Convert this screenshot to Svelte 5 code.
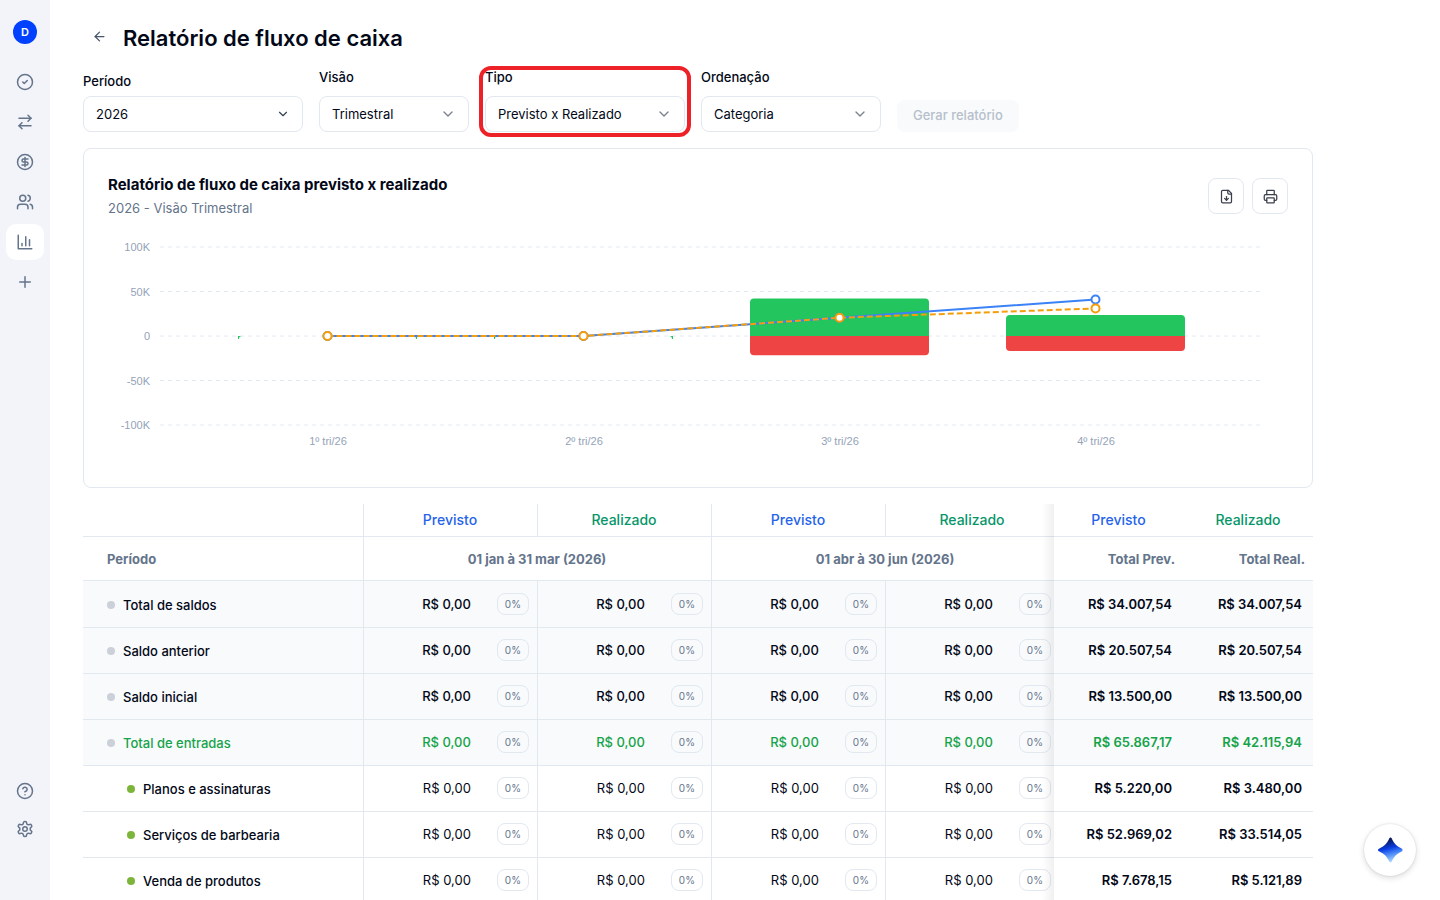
<script lang="ts">
	type Row = {
		label: string;
		kind: 'total' | 'income' | 'child';
		planned: string;
		actual: string;
	};

	const icons: Record<string, string[]> = {
		check: ['M22 12a10 10 0 1 1-20 0 10 10 0 0 1 20 0', 'm9 12 2 2 4-4'],
		transfer: ['m16 3 4 4-4 4', 'M20 7H4', 'm8 21-4-4 4-4', 'M4 17h16'],
		dollar: [
			'M22 12a10 10 0 1 1-20 0 10 10 0 0 1 20 0',
			'M16 8h-6a2 2 0 1 0 0 4h4a2 2 0 1 1 0 4H8',
			'M12 18V6'
		],
		users: [
			'M16 21v-2a4 4 0 0 0-4-4H6a4 4 0 0 0-4 4v2',
			'M13 7a4 4 0 1 1-8 0 4 4 0 0 1 8 0',
			'M22 21v-2a4 4 0 0 0-3-3.87',
			'M16 3.13a4 4 0 0 1 0 7.75'
		],
		chart: ['M3 3v18h18', 'M18 17V9', 'M13 17V5', 'M8 17v-3'],
		plus: ['M5 12h14', 'M12 5v14'],
		help: [
			'M22 12a10 10 0 1 1-20 0 10 10 0 0 1 20 0',
			'M9.09 9a3 3 0 0 1 5.83 1c0 2-3 3-3 3',
			'M12 17h.01'
		],
		settings: [
			'M12.22 2h-.44a2 2 0 0 0-2 2v.18a2 2 0 0 1-1 1.73l-.43.25a2 2 0 0 1-2 0l-.15-.08a2 2 0 0 0-2.73.73l-.22.38a2 2 0 0 0 .73 2.73l.15.1a2 2 0 0 1 1 1.72v.51a2 2 0 0 1-1 1.74l-.15.09a2 2 0 0 0-.73 2.73l.22.38a2 2 0 0 0 2.73.73l.15-.08a2 2 0 0 1 2 0l.43.25a2 2 0 0 1 1 1.73V20a2 2 0 0 0 2 2h.44a2 2 0 0 0 2-2v-.18a2 2 0 0 1 1-1.73l.43-.25a2 2 0 0 1 2 0l.15.08a2 2 0 0 0 2.73-.73l.22-.39a2 2 0 0 0-.73-2.73l-.15-.08a2 2 0 0 1-1-1.74v-.5a2 2 0 0 1 1-1.74l.15-.09a2 2 0 0 0 .73-2.73l-.22-.38a2 2 0 0 0-2.73-.73l-.15.08a2 2 0 0 1-2 0l-.43-.25a2 2 0 0 1-1-1.73V4a2 2 0 0 0-2-2z',
			'M15 12a3 3 0 1 1-6 0 3 3 0 0 1 6 0'
		],
		back: ['m12 19-7-7 7-7', 'M19 12H5'],
		chevron: ['m6 9 6 6 6-6'],
		download: [
			'M15 2H6a2 2 0 0 0-2 2v16a2 2 0 0 0 2 2h12a2 2 0 0 0 2-2V7z',
			'M14 2v4a2 2 0 0 0 2 2h4',
			'M12 18v-6',
			'm9 15 3 3 3-3'
		],
		printer: [
			'M6 18H4a2 2 0 0 1-2-2v-5a2 2 0 0 1 2-2h16a2 2 0 0 1 2 2v5a2 2 0 0 1-2 2h-2',
			'M6 9V3a1 1 0 0 1 1-1h10a1 1 0 0 1 1 1v6',
			'M7 14h10a1 1 0 0 1 1 1v6a1 1 0 0 1-1 1H7a1 1 0 0 1-1-1v-6a1 1 0 0 1 1-1z'
		]
	};

	const nav = [
		{ icon: 'check', label: 'Tarefas' },
		{ icon: 'transfer', label: 'Lançamentos' },
		{ icon: 'dollar', label: 'Financeiro' },
		{ icon: 'users', label: 'Contatos' },
		{ icon: 'chart', label: 'Relatórios' },
		{ icon: 'plus', label: 'Adicionar' }
	];

	const footerNav = [
		{ icon: 'help', label: 'Ajuda' },
		{ icon: 'settings', label: 'Configurações' }
	];

	const periods = ['01 jan à 31 mar (2026)', '01 abr à 30 jun (2026)'];

	const rows: Row[] = [
		{ label: 'Total de saldos', kind: 'total', planned: '34.007,54', actual: '34.007,54' },
		{ label: 'Saldo anterior', kind: 'total', planned: '20.507,54', actual: '20.507,54' },
		{ label: 'Saldo inicial', kind: 'total', planned: '13.500,00', actual: '13.500,00' },
		{ label: 'Total de entradas', kind: 'income', planned: '65.867,17', actual: '42.115,94' },
		{ label: 'Planos e assinaturas', kind: 'child', planned: '5.220,00', actual: '3.480,00' },
		{ label: 'Serviços de barbearia', kind: 'child', planned: '52.969,02', actual: '33.514,05' },
		{ label: 'Venda de produtos', kind: 'child', planned: '7.678,15', actual: '5.121,89' }
	];

	// chart geometry
	const plotLeft = 52;
	const plotRight = 1156;
	const band = 256;
	const barWidth = 179;
	const zeroY = 105;
	const ticks = [100, 50, 0, -50, -100];

	const quarters = [
		{ label: '1º tri/26', income: 0, expense: 0, planned: 0, actual: 0 },
		{ label: '2º tri/26', income: 0, expense: 0, planned: 0, actual: 0 },
		{ label: '3º tri/26', income: 42.1, expense: 21.6, planned: 20.5, actual: 20.5 },
		{ label: '4º tri/26', income: 23.7, expense: 16.8, planned: 41, actual: 31 }
	];

	const scaleY = (value: number) => zeroY - value * 0.89;
	const centerX = (index: number) => plotLeft + 40 + band * (index + 0.5) - 0.5;
	const tickLabel = (tick: number) => (tick === 0 ? '0' : `${tick}K`);

	const plannedLine = quarters.map((q, i) => `${centerX(i)},${scaleY(q.planned)}`).join(' ');
	const actualLine = quarters.map((q, i) => `${centerX(i)},${scaleY(q.actual)}`).join(' ');

	function barPath(index: number, value: number) {
		const x = centerX(index) - barWidth / 2;
		const end = scaleY(value);
		const r = value > 0 ? 4 : -4;
		return `M${x} ${zeroY}V${end + r}Q${x} ${end} ${x + 4} ${end}H${x + barWidth - 4}Q${x + barWidth} ${end} ${x + barWidth} ${end + r}V${zeroY}Z`;
	}
</script>

{#snippet icon(name: string, size: number)}
	<svg class="icon" viewBox="0 0 24 24" width={size} height={size} aria-hidden="true">
		{#each icons[name] as d}
			<path {d} />
		{/each}
	</svg>
{/snippet}

{#snippet field(id: string, label: string, value: string)}
	<div class="field field-{id}">
		<label for={id}>{label}</label>
		<div class="select">
			<select {id}>
				<option>{value}</option>
			</select>
			{@render icon('chevron', id === 'periodo' ? 14 : 16)}
		</div>
	</div>
{/snippet}

<div class="shell">
	<aside class="sidebar">
		<button class="avatar" aria-label="Conta">D</button>
		<nav class="nav">
			{#each nav as item}
				<a href="#{item.icon}" class="nav-item" class:active={item.icon === 'chart'} aria-label={item.label}>
					{@render icon(item.icon, 18)}
				</a>
			{/each}
		</nav>
		<nav class="nav nav-footer">
			{#each footerNav as item}
				<a href="#{item.icon}" class="nav-item" aria-label={item.label}>
					{@render icon(item.icon, 18)}
				</a>
			{/each}
		</nav>
	</aside>

	<main>
		<div class="content">
			<header class="page-header">
				<button class="back" aria-label="Voltar">{@render icon('back', 15)}</button>
				<h1>Relatório de fluxo de caixa</h1>
			</header>

			<form class="filters">
				{@render field('periodo', 'Período', '2026')}
				{@render field('visao', 'Visão', 'Trimestral')}
				{@render field('tipo', 'Tipo', 'Previsto x Realizado')}
				{@render field('ordenacao', 'Ordenação', 'Categoria')}
				<button type="button" class="generate" disabled>Gerar relatório</button>
			</form>

			<section class="card">
				<div class="card-header">
					<div>
						<h2>Relatório de fluxo de caixa previsto x realizado</h2>
						<p>2026 - Visão Trimestral</p>
					</div>
					<div class="actions">
						<button aria-label="Exportar">{@render icon('download', 15)}</button>
						<button aria-label="Imprimir">{@render icon('printer', 15)}</button>
					</div>
				</div>

				<svg class="chart" viewBox="0 0 1180 232">
					{#each ticks as tick}
						<line class="grid" x1={plotLeft} x2={plotRight} y1={scaleY(tick)} y2={scaleY(tick)} />
						<text x={plotLeft - 10} y={scaleY(tick) + 4} text-anchor="end">{tickLabel(tick)}</text>
					{/each}

					{#each quarters as quarter, i}
						{#if quarter.income > 0}
							<path d={barPath(i, quarter.income)} fill="#22c55e" />
							<path d={barPath(i, -quarter.expense)} fill="#ef4444" />
						{:else}
							<!-- an empty bar keeps only its corner marks -->
							<path
								d="M{centerX(i) - 89.5} {zeroY}h4q-3 0-3 3h-1zM{centerX(i) + 89.5} {zeroY}h-4q3 0 3 3h1z"
								fill="#22c55e"
							/>
						{/if}
						<text x={centerX(i) + 0.5} y="214" text-anchor="middle">{quarter.label}</text>
					{/each}

					<polyline class="line planned" points={plannedLine} />
					{#each quarters as quarter, i}
						<circle class="dot planned" cx={centerX(i)} cy={scaleY(quarter.planned)} r="4" />
					{/each}
					<polyline class="line actual" points={actualLine} />
					{#each quarters as quarter, i}
						<circle class="dot actual" cx={centerX(i)} cy={scaleY(quarter.actual)} r="4" />
					{/each}
				</svg>
			</section>

			<div class="table-wrap">
				<table>
					<colgroup>
						<col class="col-label" />
						{#each periods as _}
							<col class="col-value" />
							<col class="col-value" />
						{/each}
						<col class="col-planned" />
						<col class="col-actual" />
					</colgroup>
					<thead>
						<tr class="kinds">
							<td></td>
							{#each periods as _}
								<th class="planned">Previsto</th>
								<th class="actual">Realizado</th>
							{/each}
							<th class="sticky first planned">Previsto</th>
							<th class="sticky last actual">Realizado</th>
						</tr>
						<tr class="periods">
							<th class="label">Período</th>
							{#each periods as period}
								<th colspan="2">{period}</th>
							{/each}
							<th class="sticky first">Total Prev.</th>
							<th class="sticky last">Total Real.</th>
						</tr>
					</thead>
					<tbody>
						{#each rows as row}
							<tr class={row.kind}>
								<th class="label" scope="row">
									<div class="name"><span class="bullet"></span>{row.label}</div>
								</th>
								{#each [0, 1, 2, 3] as _}
									<td>
										<div class="amount">R$ 0,00 <span class="badge">0%</span></div>
									</td>
								{/each}
								<td class="sticky first">R$ {row.planned}</td>
								<td class="sticky last">R$ {row.actual}</td>
							</tr>
						{/each}
					</tbody>
				</table>
			</div>
		</div>
	</main>

	<button class="assistant" aria-label="Assistente">
		<svg viewBox="0 0 26 26" width="26" height="26" aria-hidden="true">
			<defs>
				<linearGradient id="spark" x1="0.35" y1="0" x2="0.6" y2="1">
					<stop offset="0.1" stop-color="#0a1a5c" />
					<stop offset="0.42" stop-color="#0a3be0" />
					<stop offset="0.6" stop-color="#3b78f5" />
					<stop offset="1" stop-color="#b5e3ff" />
				</linearGradient>
			</defs>
			<path
				d="M13.5.5c.7 0 1.100.6 1.500 1.400 2.300 4.700 4.900 7.200 9.600 9.500.8.400.9.900.9 1.600s-.1 1.200-.9 1.600c-4.700 2.300-7.300 4.800-9.600 9.500-.4.800-.8 1.400-1.500 1.400s-1.100-.6-1.500-1.400C9.700 19.400 7.100 16.900 2.400 14.600 1.600 14.200 1 13.700 1 13s.6-1.200 1.400-1.600C7.100 9.100 9.700 6.600 12 1.900c.4-.8.8-1.400 1.500-1.400z"
				fill="url(#spark)"
			/>
		</svg>
	</button>
</div>

<style>
	:global(body) {
		background: #fff;
	}
	.shell {
		display: flex;
		height: 100vh;
		overflow: hidden;
		font-family: Inter, sans-serif;
		font-size: 13px;
		line-height: 20px;
		color: #020817;
	}
	button, select { font: inherit; color: inherit; }
	button { padding: 0; border: 0; background: none; cursor: pointer; }
	h1, h2, p { margin: 0; }
	.icon {
		display: block;
		flex-shrink: 0;
		fill: none;
		stroke: currentColor;
		stroke-width: 2;
		stroke-linecap: round;
		stroke-linejoin: round;
	}

	.sidebar {
		display: flex;
		flex-direction: column;
		align-items: center;
		flex: 0 0 50px;
		box-sizing: border-box;
		padding: 20px 0 53px;
		background: #f2f4f9;
	}
	.avatar {
		width: 24px;
		height: 24px;
		margin-bottom: 20px;
		border-radius: 50%;
		background: #0040ff;
		color: #fff;
		font-size: 11px;
		font-weight: 600;
	}
	.nav { display: grid; gap: 4px; }
	.nav-footer { gap: 2px; margin-top: auto; }
	.nav-item {
		display: grid;
		place-items: center;
		width: 38px;
		height: 36px;
		border-radius: 10px;
		color: #64748b;
	}
	.nav-item.active { background: #fff; }

	main {
		flex: 1;
		min-width: 0;
		padding: 22px 33px 0;
		overflow-y: auto;
		scrollbar-width: none;
	}
	.content { max-width: 1230px; }
	.page-header {
		display: flex;
		gap: 8px;
		margin-bottom: 12px;
	}
	.back {
		display: grid;
		place-items: center;
		width: 32px;
		height: 28px;
		color: #475569;
	}
	h1 {
		font-size: 22px;
		line-height: 32px;
		font-weight: 600;
	}

	.filters {
		display: flex;
		align-items: flex-end;
		gap: 16px;
		margin-bottom: 16px;
	}
	.field {
		position: relative;
		display: grid;
		gap: 8px;
		width: 180px;
	}
	.field label { line-height: 22px; font-weight: 500; }
	.field-periodo { width: 220px; }
	.field-periodo label { line-height: 14px; }
	.field-visao { width: 150px; }
	.field-tipo { width: 200px; }
	.field-tipo::after {
		content: '';
		position: absolute;
		inset: 0 -6px -5px;
		border: 4px solid #ed2228;
		border-radius: 12px;
		pointer-events: none;
	}
	.select { display: grid; align-items: center; }
	.select > :global(*) { grid-area: 1 / 1; }
	.select :global(.icon) {
		justify-self: end;
		margin-right: 13px;
		color: #7c828d;
		pointer-events: none;
	}
	.field-periodo :global(.icon) { color: #334155; }
	select {
		appearance: none;
		width: 100%;
		height: 36px;
		padding: 0 12px;
		border: 1px solid #e2e8f0;
		border-radius: 8px;
		background: #fff;
	}
	.generate {
		height: 32px;
		padding: 0 16px 2px;
		border-radius: 8px;
		background: #f8fafc;
		color: #b6bfcb;
		font-weight: 500;
	}

	.card {
		margin-bottom: 16px;
		padding: 24px;
		border: 1px solid #e2e8f0;
		border-radius: 8px;
	}
	.card-header {
		display: flex;
		align-items: center;
		justify-content: space-between;
		margin-bottom: 12px;
	}
	h2 {
		font-size: 15px;
		line-height: 24px;
		font-weight: 700;
	}
	.card-header p { line-height: 22px; color: #64748b; }
	.actions { display: flex; gap: 8px; }
	.actions button {
		display: grid;
		place-items: center;
		width: 36px;
		height: 36px;
		border: 1px solid #e2e8f0;
		border-radius: 8px;
		color: #3b3f4c;
	}
	.chart { display: block; width: 100%; }
	.chart text {
		font-family: "Liberation Sans", Arial, sans-serif;
		font-size: 11px;
		fill: #94a3b8;
	}
	.grid { stroke: #e2e8f0; stroke-dasharray: 4 4; }
	.line { fill: none; stroke-width: 2; }
	.dot { fill: #fff; stroke-width: 2; }
	.line.planned, .dot.planned { stroke: #3b82f6; }
	.line.actual, .dot.actual { stroke: #f59e0b; }
	.line.actual { stroke-dasharray: 6 3; }

	.table-wrap { overflow-x: auto; scrollbar-width: none; }
	table {
		table-layout: fixed;
		width: 100%;
		min-width: 1235px;
		border-collapse: separate;
		border-spacing: 0;
	}
	.col-label { width: 280px; }
	.col-planned { width: 129px; }
	.col-actual { width: 130px; }
	th, td {
		padding: 0;
		border-bottom: 1px solid #e2e8f0;
		background: #fff;
		font-weight: 400;
	}
	thead th:not(.label):not(.sticky), tbody td:not(.sticky) { border-left: 1px solid #e2e8f0; }
	thead th:not(.label):not(.sticky) { padding-right: 1px; }
	.kinds > * { height: 32px; font-size: 14px; font-weight: 500; }
	.kinds .planned { color: #2563eb; }
	.kinds .actual { color: #059669; }
	.periods > * { height: 43px; font-weight: 700; color: #64748b; }
	.label { padding-left: 24px; text-align: left; }
	tbody th { height: 45px; }
	tbody td { padding-top: 11px; line-height: 22px; vertical-align: top; }
	tbody tr:first-child th { padding-top: 1px; }
	tbody tr:first-child td { padding-top: 12px; }
	.total > *, .income > * { background: #f8fafc; }
	.total td, .income td { font-weight: 500; }
	.name {
		display: flex;
		align-items: center;
		gap: 8px;
		font-weight: 500;
	}
	.bullet {
		width: 8px;
		height: 8px;
		border-radius: 50%;
		background: #cbd0d9;
	}
	.child .label { padding-left: 44px; }
	.child .bullet { background: #7cb53a; }
	.income .name, .income td { color: #16a34a; }
	.amount {
		display: flex;
		align-items: center;
		justify-content: flex-end;
		gap: 26px;
		padding-right: 8px;
	}
	.badge {
		padding: 0 7px;
		border: 1px solid #e2e8f0;
		border-radius: 8px;
		font-size: 10px;
		line-height: 20px;
		font-weight: 400;
		color: #64748b;
	}
	.sticky { position: sticky; }
	.sticky.first { right: 130px; }
	.sticky.last { right: 0; }
	.sticky.first::before {
		content: '';
		position: absolute;
		top: 0;
		bottom: -1px;
		right: 100%;
		width: 12px;
		background: linear-gradient(to left, rgba(0, 0, 0, 0.06), rgba(0, 0, 0, 0));
	}
	.periods .sticky { padding-right: 8px; text-align: right; }
	tbody .sticky { padding-right: 11px; text-align: right; font-weight: 600; }

	.assistant {
		position: fixed;
		right: 24px;
		bottom: 24px;
		display: grid;
		place-items: center;
		width: 52px;
		height: 52px;
		border-radius: 50%;
		background: #fff;
		box-shadow: 0 0 2px rgba(0, 0, 0, 0.16), 0 2px 6px rgba(0, 0, 0, 0.14);
	}
</style>
